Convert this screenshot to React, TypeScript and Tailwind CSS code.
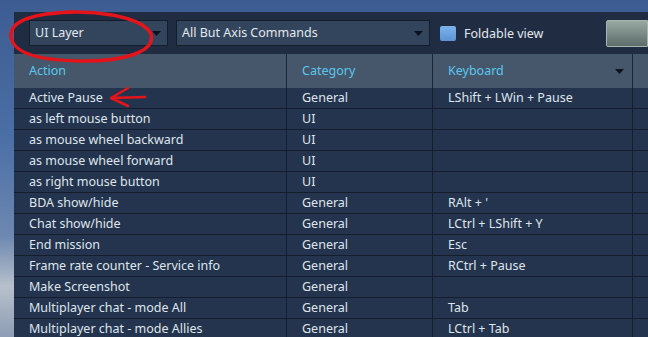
import type { FC } from "react";

interface Binding {
    action: string;
    category: string;
    keyboard: string;
}

const rows: Binding[] = [
    { action: "Active Pause", category: "General", keyboard: "LShift + LWin + Pause" },
    { action: "as left mouse button", category: "UI", keyboard: "" },
    { action: "as mouse wheel backward", category: "UI", keyboard: "" },
    { action: "as mouse wheel forward", category: "UI", keyboard: "" },
    { action: "as right mouse button", category: "UI", keyboard: "" },
    { action: "BDA show/hide", category: "General", keyboard: "RAlt + '" },
    { action: "Chat show/hide", category: "General", keyboard: "LCtrl + LShift + Y" },
    { action: "End mission", category: "General", keyboard: "Esc" },
    { action: "Frame rate counter - Service info", category: "General", keyboard: "RCtrl + Pause" },
    { action: "Make Screenshot", category: "General", keyboard: "" },
    { action: "Multiplayer chat - mode All", category: "General", keyboard: "Tab" },
    { action: "Multiplayer chat - mode Allies", category: "General", keyboard: "LCtrl + Tab" },
];

const Caret: FC = () => (
    <svg width="9" height="5" viewBox="0 0 9 5" className="shrink-0">
        <path d="M0 0 H9 L4.5 5 Z" fill="#0c1320" />
    </svg>
);

const Dropdown: FC<{ label: string; width: string }> = ({ label, width }) => (
    <div
        className={`flex h-[26px] items-center justify-between border border-[#141d2c] bg-[#33455d] pl-[5px] pr-[6px] ${width}`}
    >
        <span className="text-[12.5px] text-[#e3e8ee]">{label}</span>
        <Caret />
    </div>
);

const App: FC = () => {
    return (
        <div
            className="relative h-[337px] w-[648px] overflow-hidden bg-[linear-gradient(180deg,#3d5c92_0%,#4a6ea6_40%,#6d88b0_70%,#b7c0cc_85%,#8e9db4_100%)]"
            style={{ fontFamily: '"Noto Sans", "DejaVu Sans", sans-serif' }}
        >
            <div className="pl-[14px] pt-[12px]">
                <div className="flex flex-col bg-[#1f2c42]">

                    {/* Barra de filtros */}
                    <div className="flex h-[41px] items-start pt-[8px] pl-[15px]">
                        <Dropdown label="UI Layer" width="w-[139px]" />
                        <div className="ml-[8px]">
                            <Dropdown label="All But Axis Commands" width="w-[254px]" />
                        </div>
                        <div className="ml-[10px] mt-[6px] h-[15px] w-[16px] rounded-[2px] bg-[linear-gradient(180deg,#7db3ec,#5b93d6)]" />
                        <span className="ml-[8px] mt-[5px] text-[12.5px] leading-[17px] text-[#e3e8ee]">
                            Foldable view
                        </span>
                        <div className="ml-auto h-[27px] w-[42px] rounded-l-[2px] border border-[#a6b4ae] bg-[linear-gradient(180deg,#98a8a2,#5d6d6a)]" />
                    </div>

                    {/* Encabezado */}
                    <div className="mt-[1px] flex h-[34px] items-center bg-[#46566b] text-[12.5px] text-[#5ac8ec]">
                        <div className="flex h-full w-[273px] items-center border-r border-[#1a2537] pl-[15px]">
                            Action
                        </div>
                        <div className="flex h-full w-[146px] items-center border-r border-[#1a2537] pl-[15px]">
                            Category
                        </div>
                        <div className="flex h-full w-[200px] items-center justify-between border-r border-[#1a2537] pl-[15px] pr-[8px]">
                            Keyboard
                            <Caret />
                        </div>
                        <div className="h-full flex-1" />
                    </div>

                    {/* Filas */}
                    {rows.map((row) => (
                        <div
                            key={row.action}
                            className="flex h-[21px] items-center border-b border-[#151e2d] bg-[#24344e] text-[12.5px] text-[#dfe5ec]"
                        >
                            <div className="flex h-full w-[273px] items-center border-r border-[#151e2d] pl-[15px]">
                                {row.action}
                            </div>
                            <div className="flex h-full w-[146px] items-center border-r border-[#151e2d] pl-[15px]">
                                {row.category}
                            </div>
                            <div className="flex h-full w-[200px] items-center border-r border-[#151e2d] pl-[15px]">
                                {row.keyboard}
                            </div>
                            <div className="h-full flex-1" />
                        </div>
                    ))}
                </div>
            </div>

            {/* Anotaciones en rojo */}
            <svg
                className="pointer-events-none absolute left-0 top-0"
                width="648"
                height="337"
                viewBox="0 0 648 337"
            >
                <path
                    d="M48 14 C90 8 142 16 151 34 C156 53 120 62 78 61 C36 60 12 52 11 36 C10 20 36 13 72 12"
                    fill="none"
                    stroke="#e4141a"
                    strokeWidth="3.5"
                    strokeLinecap="round"
                />
                <path
                    d="M111 98 L145 97 M111 98 L128 88 M111 98 L128 106"
                    fill="none"
                    stroke="#e4141a"
                    strokeWidth="2.5"
                    strokeLinecap="round"
                />
            </svg>
        </div>
    );
};

export default App;
